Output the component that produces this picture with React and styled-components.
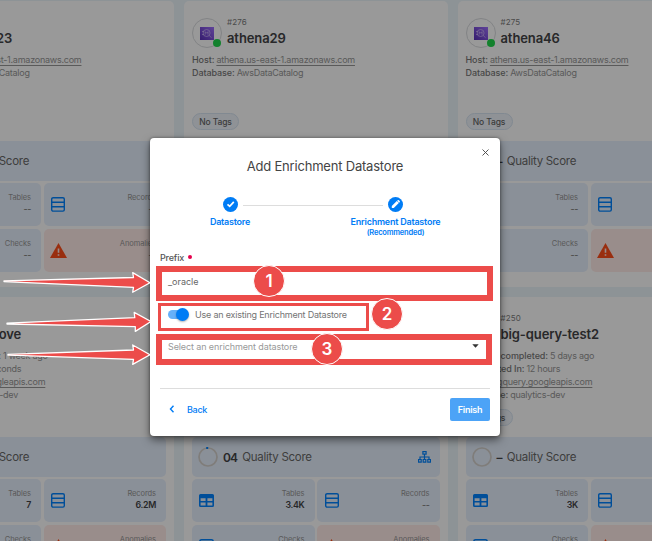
import React from "react";
import styled, { createGlobalStyle } from "styled-components";

const Global = createGlobalStyle`
  * { box-sizing: border-box; }
  html, body { margin: 0; height: 100%; overflow: hidden; }
  body { font-family: Inter, "Liberation Sans", sans-serif; background: #ecf5fb; }
  svg { display: block; flex: none; }
`;

const Page = styled.main`
  position: relative;
  width: 652px;
  height: 541px;
  overflow: hidden;
`;

const CardGrid = styled.div`
  display: grid;
  grid-template-columns: repeat(3, 263.5px);
  grid-auto-rows: 286px;
  gap: 10px;
  margin-left: -89.5px;
  padding-top: 1px;
`;

const Card = styled.article`
  display: flex;
  flex-direction: column;
  height: 286px;
  padding: 17px 8px 0;
  border-radius: 5px;
  background: #fff;
`;

const CardHead = styled.header`
  display: flex;
  gap: 5px;
  height: 35px;
`;

const Avatar = styled.div`
  position: relative;
  display: grid;
  place-items: center;
  flex: none;
  width: 30px;
  height: 30px;
  border: 1px solid #d9dbde;
  border-radius: 50%;
`;

const StatusDot = styled.span`
  position: absolute;
  right: 0;
  bottom: 0;
  width: 8px;
  height: 8px;
  border-radius: 50%;
  background: #20d84c;
`;

const HeadText = styled.div`
  display: flex;
  flex-direction: column;
  white-space: nowrap;
`;

const CardId = styled.span`
  font-size: 8px;
  line-height: 9px;
  letter-spacing: 0.15px;
  color: #7c7c7c;
`;

const CardName = styled.h2`
  margin: 3px 0 0;
  font-size: 13px;
  font-weight: 600;
  line-height: 17px;
  letter-spacing: -0.1px;
  color: #444446;
`;

const InfoRow = styled.div`
  height: 13px;
  font-size: 9px;
  line-height: 14px;
  letter-spacing: ${(p) => (p.$link ? "-0.24px" : "-0.26px")};
  white-space: nowrap;
  color: #969696;
`;

const InfoLabel = styled.span`
  margin-right: 2px;
  font-weight: 500;
  letter-spacing: -0.08px;
  color: #787878;
`;

const InfoLink = styled.span`
  text-decoration: underline;
  text-underline-offset: 2px;
`;

const Tag = styled.span`
  display: flex;
  align-items: center;
  justify-content: center;
  width: 47px;
  height: 17px;
  margin: auto 0 11px;
  border: 1px solid #d7e4f2;
  border-radius: 9px;
  background: #eef4fa;
  font-size: 8.5px;
  font-weight: 500;
  letter-spacing: -0.1px;
  color: #666;
`;

const Top = styled.div`
  display: flex;
  flex-direction: column;
  height: 123px;
`;

const ScoreBar = styled.div`
  display: flex;
  align-items: center;
  flex: none;
  height: 40px;
  padding: 0 9px 0 6px;
  border-radius: 5px;
  background: #e7f0fd;
`;

const ScoreValue = styled.strong`
  margin-left: 5px;
  margin-right: 5px;
  font-size: 12px;
  font-weight: 600;
  letter-spacing: -0.8px;
  color: #444446;
`;

const ScoreLabel = styled.span`
  flex: 1;
  font-size: 11.5px;
  letter-spacing: -0.28px;
  white-space: nowrap;
  color: #686868;
`;

const Tiles = styled.div`
  display: grid;
  grid-template-columns: 1fr 1fr;
  grid-auto-rows: 43px;
  gap: 3px 2.5px;
  margin-top: 2px;
`;

const Tile = styled.div`
  display: flex;
  justify-content: space-between;
  padding: 10px 10px 0 6px;
  border-radius: 5px;
  background: ${(p) => (p.$alert ? "#ffebe8" : "#e7f0fd")};
`;

const TileIcon = styled.div`
  display: grid;
  place-items: center;
  width: 17px;
  height: 23px;
`;

const TileText = styled.div`
  display: flex;
  flex-direction: column;
  align-items: flex-end;
`;

const TileLabel = styled.span`
  font-size: 7.5px;
  line-height: 10px;
  letter-spacing: -0.08px;
  color: #959595;
`;

const TileValue = styled.span`
  font-size: 8.8px;
  font-weight: 600;
  line-height: 12px;
  letter-spacing: -0.3px;
  color: ${(p) => (p.$empty ? "#888" : "#444446")};
`;

const Backdrop = styled.div`
  position: absolute;
  inset: 0;
  display: flex;
  justify-content: center;
  align-items: flex-start;
  padding: 138px 2px 0 0;
  background: rgba(0, 0, 0, 0.4);
`;

const Dialog = styled.section`
  display: flex;
  flex-direction: column;
  width: 350px;
  height: 298px;
  padding: 9px 10px 0;
  border-radius: 4px;
  background: #fff;
  box-shadow: 0 4px 9px rgba(0, 0, 0, 0.5), 0 0 3px rgba(0, 0, 0, 0.4);
`;

const CloseRow = styled.div`
  display: flex;
  justify-content: flex-end;
  height: 10px;
`;

const CloseButton = styled.button`
  display: grid;
  place-items: center;
  width: 9px;
  height: 10px;
  padding: 0;
  border: 0;
  background: none;
`;

const Title = styled.h1`
  margin: 0;
  font-size: 13px;
  font-weight: 400;
  line-height: 19px;
  letter-spacing: -0.2px;
  text-align: center;
  color: #444;
`;

const Stepper = styled.div`
  display: grid;
  grid-template-columns: 140px 50px 140px;
  height: 58px;
  margin-top: 21px;
`;

const Step = styled.div`
  display: flex;
  flex-direction: column;
  align-items: center;
  margin-left: ${(p) => p.$shift};
  color: #007cf5;
  font-size: 9px;
  font-weight: 600;
  letter-spacing: -0.23px;
  white-space: nowrap;
`;

const StepLine = styled.div`
  height: 1px;
  margin: 8px -33px 0 -57px;
  background: #ddd;
`;

const StepLabel = styled.span`
  margin-top: 4px;
  line-height: 12px;
`;

const StepNote = styled.span`
  font-size: 7.5px;
  line-height: 9px;
  letter-spacing: -0.2px;
`;

const FieldLabel = styled.label`
  display: flex;
  align-items: center;
  gap: 4px;
  height: 12px;
  margin-top: -4px;
  font-size: 9px;
  font-weight: 500;
  letter-spacing: -0.17px;
  color: #555;
`;

const RequiredDot = styled.i`
  width: 4px;
  height: 3.5px;
  border-radius: 2px;
  background: #e6004c;
`;

const Field = styled.div`
  display: flex;
  align-items: center;
  justify-content: space-between;
  height: ${(p) => p.$height};
  margin-top: ${(p) => p.$top};
  padding: 0 11.5px 0 8px;
  font-size: 9px;
  letter-spacing: ${(p) => (p.$placeholder ? "-0.11px" : "0")};
  color: ${(p) => (p.$placeholder ? "#999" : "#666")};
`;

const SwitchRow = styled.div`
  display: flex;
  align-items: center;
  height: 20px;
  margin-top: 11px;
  padding-left: 8px;
  font-size: 9px;
  letter-spacing: -0.21px;
  color: #747474;
`;

const SwitchTrack = styled.span`
  display: flex;
  align-items: center;
  justify-content: flex-end;
  width: 18px;
  height: 9px;
  margin-right: 9px;
  border-radius: 5px;
  background: #66b0f9;
`;

const SwitchKnob = styled.span`
  flex: none;
  width: 13px;
  height: 13px;
  margin-right: -3px;
  border-radius: 50%;
  background: #007cf5;
  box-shadow: 0 1px 2px rgba(0, 0, 0, 0.3);
`;

const Footer = styled.footer`
  display: flex;
  align-items: flex-start;
  justify-content: space-between;
  margin-top: 32px;
  padding-top: 9px;
  border-top: 1px solid #ddd;
`;

const BackButton = styled.button`
  display: flex;
  align-items: center;
  gap: 12px;
  height: 22px;
  padding: 0 0 0 9px;
  border: 0;
  background: none;
  font: 500 9px Inter, sans-serif;
  letter-spacing: -0.3px;
  color: #007cf5;
`;

const FinishButton = styled.button`
  width: 40px;
  height: 23px;
  padding: 0;
  border: 0;
  border-radius: 2px;
  background: #4ca3f7;
  font: 600 9px Inter, sans-serif;
  letter-spacing: -0.25px;
  color: #fff;
`;

const Highlight = styled.div`
  position: absolute;
  left: ${(p) => p.$x}px;
  top: ${(p) => p.$y}px;
  width: ${(p) => p.$w}px;
  height: ${(p) => p.$h}px;
  border: ${(p) => p.$border}px solid #ec4c4a;
`;

const Marker = styled.div`
  position: absolute;
  left: ${(p) => p.$x}px;
  top: ${(p) => p.$y}px;
  display: grid;
  place-items: center;
  width: 32px;
  height: 32px;
  border: 1px solid #fff;
  border-radius: 50%;
  background: #ec4c4a;
  font: 600 17px/30px Inter, sans-serif;
  color: #fff;
`;

const Arrows = styled.svg`
  position: absolute;
  left: 0;
  top: 266px;
`;

const BLUE = "#0083ff";

const AthenaIcon = () => (
  <svg width="14" height="13" viewBox="0 0 14 13">
    <defs>
      <linearGradient id="athena" x1="0" y1="1" x2="1" y2="0">
        <stop offset="0" stopColor="#5a30b8" />
        <stop offset="1" stopColor="#a070ff" />
      </linearGradient>
    </defs>
    <rect width="14" height="13" fill="url(#athena)" />
    <g fill="none" stroke="#e6d9ff" strokeWidth="0.7" opacity="0.8">
      <circle cx="6.6" cy="6" r="3.5" />
      <path d="M2 4.5h2M2 7.5h2M5.2 7.6V4.7l1.4 1.5L8 4.7v2.9M9.2 8.5l2.4 2.2" />
    </g>
  </svg>
);

const ListIcon = () => (
  <svg width="14" height="15" viewBox="0 0 14 15" fill="none" stroke={BLUE} strokeWidth="1.4">
    <rect x="0.7" y="0.7" width="12.6" height="13.4" rx="1.4" />
    <path d="M1 5.2h12M1 9.8h12" />
  </svg>
);

const TableIcon = () => (
  <svg width="15" height="13" viewBox="0 0 15 13">
    <path
      fill={BLUE}
      fillRule="evenodd"
      d="M1.5 0h12A1.5 1.5 0 0 1 15 1.5v10a1.5 1.5 0 0 1-1.5 1.5h-12A1.5 1.5 0 0 1 0 11.5v-10A1.5 1.5 0 0 1 1.5 0zM1.6 4.2v2.7h5V4.2zm6.8 0v2.7h5V4.2zM1.6 8.5v2.9h5V8.5zm6.8 0v2.9h5V8.5z"
    />
  </svg>
);

const CheckIcon = () => (
  <svg width="15" height="15" viewBox="0 0 15 15" fill="none" stroke={BLUE} strokeWidth="1.5">
    <rect x="0.8" y="0.8" width="13.4" height="13.4" rx="1.6" />
    <path d="M4 7.5l2.5 2.5L11 5.5" />
  </svg>
);

const WarningIcon = () => (
  <svg width="17" height="15" viewBox="0 0 17 15">
    <path d="M8.5 0L17 15H0z" fill="#ff4d1a" />
    <path d="M8.5 5.4v4.4M8.5 11.2v1.5" stroke="#ffebe8" strokeWidth="1.6" />
  </svg>
);

const SitemapIcon = () => (
  <svg width="13" height="12" viewBox="0 0 13 12" fill="none" stroke={BLUE} strokeWidth="1.2">
    <rect x="4.9" y="0.6" width="3.2" height="2.5" />
    <path d="M6.5 3v5.5M2 8.3V6h9v2.3" />
    <path d="M0.6 8.5h2.6v2.7H0.6zM5.2 8.5h2.6v2.7H5.2zM9.8 8.5h2.6v2.7H9.8z" />
  </svg>
);

const ScoreRing = ({ marked }) => (
  <svg width="20" height="20" viewBox="0 0 20 20" fill="none" strokeWidth="1.7">
    <circle cx="10" cy="10" r="9" stroke="#d4d0cc" />
    {marked && <path d="M8.2 1h2" stroke={BLUE} strokeWidth="2" />}
  </svg>
);

const CheckBadge = () => (
  <svg width="15" height="15" viewBox="0 0 15 15">
    <circle cx="7.5" cy="7.5" r="7.5" fill="#007cf5" />
    <path d="M4.5 7.3l2.2 2L10.8 4.9" fill="none" stroke="#fff" strokeWidth="1.7" />
  </svg>
);

const PencilBadge = () => (
  <svg width="15" height="15" viewBox="0 0 15 15">
    <circle cx="7.5" cy="7.5" r="7.5" fill="#007cf5" />
    <path d="M3.8 11.1v-2l5-5 2 2-5 5zM9.2 3.7l.7-.6q.5-.3.9.1l.9.9q.4.4.1.9l-.7.7z" fill="#fff" />
  </svg>
);

const athena = (id, name) => ({
  id,
  name,
  rows: [
    ["Host:", "athena.us-east-1.amazonaws.com", true],
    ["Database:", "AwsDataCatalog"],
  ],
  score: "–",
  tables: "--",
  records: "--",
});

const bigQuery = (id, name, when, took, extra) => ({
  id,
  name,
  rows: [
    ["Catalog completed:", when],
    ["Completed In:", took],
    ["Host:", "bigquery.googleapis.com", true],
    ["Database:", "qualytics-dev"],
  ],
  ...extra,
});

const stores = [
  athena("#277", "athena23"),
  athena("#276", "athena29"),
  athena("#275", "athena46"),
  bigQuery("#252", "bank-trove", "1 week ago", "5 seconds", { score: "–", tables: "7", records: "6.2M" }),
  bigQuery("#251", "big-query", "5 days ago", "12 hours", { score: "04", tables: "3.4K", records: "--", linked: true }),
  bigQuery("#250", "big-query-test2", "5 days ago", "12 hours", { score: "–", tables: "3K", records: "--" }),
];

const Metric = ({ icon, label, value, alert }) => (
  <Tile $alert={alert}>
    <TileIcon>{icon}</TileIcon>
    <TileText>
      <TileLabel>{label}</TileLabel>
      <TileValue $empty={value === "--"}>{value}</TileValue>
    </TileText>
  </Tile>
);

const StoreCard = ({ store }) => (
  <Card>
    <Top>
      <CardHead>
        <Avatar>
          <AthenaIcon />
          <StatusDot />
        </Avatar>
        <HeadText>
          <CardId>{store.id}</CardId>
          <CardName>{store.name}</CardName>
        </HeadText>
      </CardHead>
      {store.rows.map(([label, value, link]) => (
        <InfoRow key={label} $link={link}>
          <InfoLabel>{label}</InfoLabel>
          {link ? <InfoLink>{value}</InfoLink> : value}
        </InfoRow>
      ))}
      <Tag>No Tags</Tag>
    </Top>
    <ScoreBar>
      <ScoreRing marked={store.score !== "–"} />
      <ScoreValue>{store.score}</ScoreValue>
      <ScoreLabel>Quality Score</ScoreLabel>
      {store.linked && <SitemapIcon />}
    </ScoreBar>
    <Tiles>
      <Metric icon={<TableIcon />} label="Tables" value={store.tables} />
      <Metric icon={<ListIcon />} label="Records" value={store.records} />
      <Metric icon={<CheckIcon />} label="Checks" value="--" />
      <Metric icon={<WarningIcon />} label="Anomalies" value="--" alert />
    </Tiles>
  </Card>
);

export default function App() {
  return (
    <Page>
      <Global />
      <CardGrid>
        {stores.map((s) => (
          <StoreCard key={s.id} store={s} />
        ))}
      </CardGrid>
      <Backdrop>
        <Dialog>
          <CloseRow>
            <CloseButton aria-label="Close">
              <svg width="7" height="7" viewBox="0 0 7 7" stroke="#444" strokeWidth="0.9">
                <path d="M0.5 0.5l6 6M6.5 0.5l-6 6" />
              </svg>
            </CloseButton>
          </CloseRow>
          <Title>Add Enrichment Datastore</Title>
          <Stepper>
            <Step $shift="0">
              <CheckBadge />
              <StepLabel>Datastore</StepLabel>
            </Step>
            <StepLine />
            <Step $shift="-49px">
              <PencilBadge />
              <StepLabel>Enrichment Datastore</StepLabel>
              <StepNote>(Recommended)</StepNote>
            </Step>
          </Stepper>
          <FieldLabel>
            Prefix
            <RequiredDot />
          </FieldLabel>
          <Field $height="24px" $top="6px">_oracle</Field>
          <SwitchRow>
            <SwitchTrack>
              <SwitchKnob />
            </SwitchTrack>
            Use an existing Enrichment Datastore
          </SwitchRow>
          <Field $height="20px" $top="12px" $placeholder>
            Select an enrichment datastore
            <svg width="7" height="4" viewBox="0 0 7 4">
              <path d="M0.3 0.3h6.4L3.5 3.7z" fill="#333" />
            </svg>
          </Field>
          <Footer>
            <BackButton>
              <svg width="6" height="8" viewBox="0 0 6 8" fill="none" stroke="#007cf5" strokeWidth="1.4">
                <path d="M4.5 0.8L1.5 4l3 3.2" />
              </svg>
              Back
            </BackButton>
            <FinishButton>Finish</FinishButton>
          </Footer>
        </Dialog>
      </Backdrop>
      <Highlight $x={156} $y={266} $w={337} $h={35} $border={6} />
      <Highlight $x={158} $y={303} $w={211} $h={28} $border={3} />
      <Highlight $x={156} $y={334} $w={336} $h={31} $border={6} />
      <Arrows width="155" height="102" viewBox="0 266 155 102" fill="#ec4c4a" stroke="#fff" strokeWidth="1.3" strokeLinejoin="round">
        <path d="M4 280.8L133.5 277.5L132.7 272.6L150 282.7L132.7 292.2L133.5 287.3L4 281.6z" />
        <path d="M7 323.2L134.8 317.7L134.2 312.4L151 321.5L135.3 331.4L135.3 326.7L7 324z" />
        <path d="M8 354.3L133.5 350L132.7 345L150 354.7L132.7 364.4L133.5 359.3L8 355.2z" />
      </Arrows>
      <Marker $x={253} $y={265}>1</Marker>
      <Marker $x={371} $y={298}>2</Marker>
      <Marker $x={311} $y={333}>3</Marker>
    </Page>
  );
}
